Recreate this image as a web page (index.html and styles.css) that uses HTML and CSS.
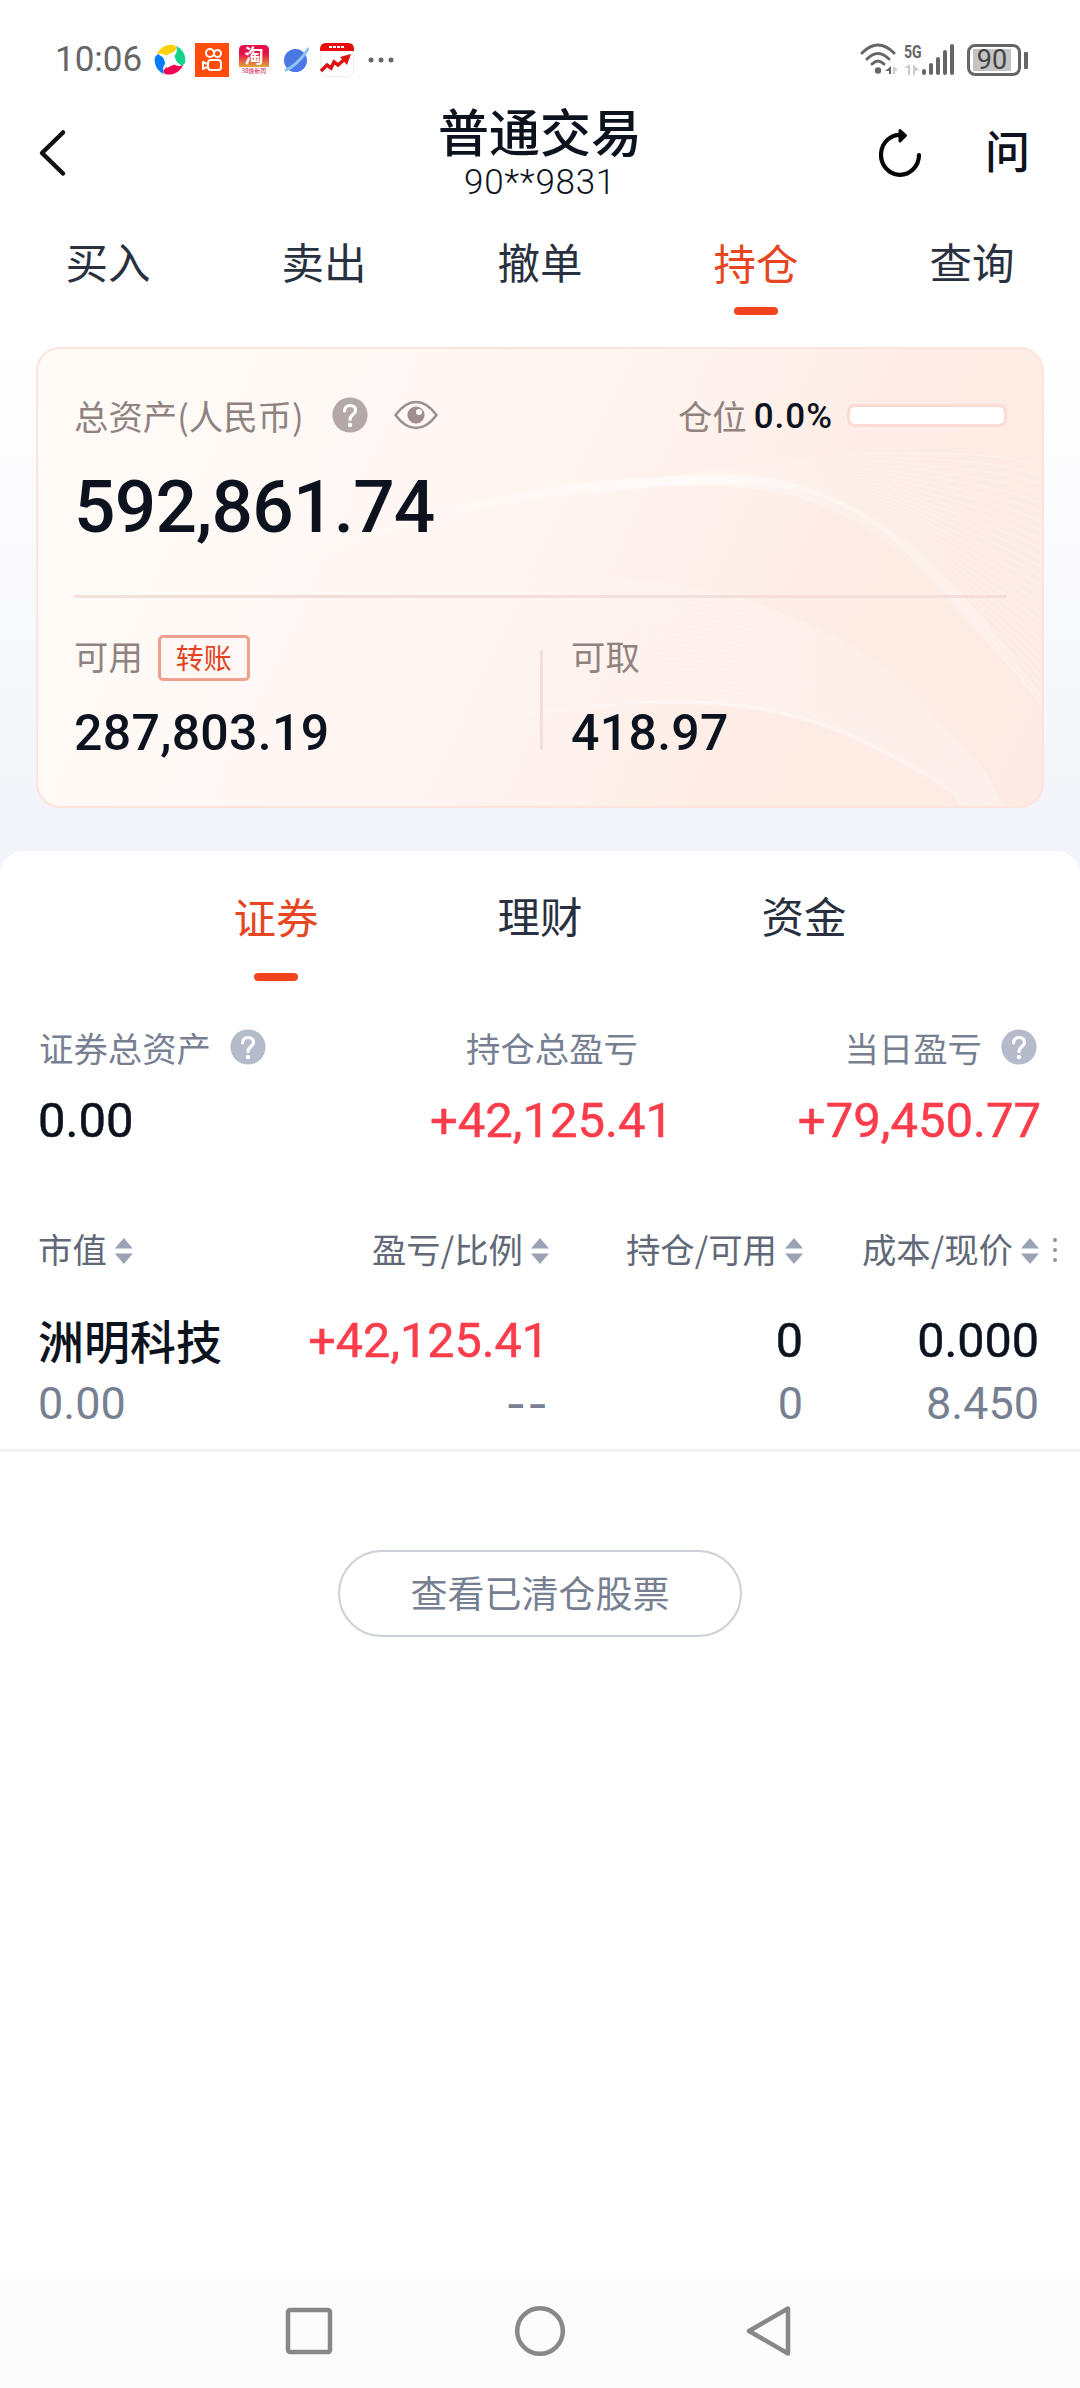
FILE: index.html
```html
<!DOCTYPE html>
<html lang="zh-CN">
<head>
  <meta charset="UTF-8">
  <meta name="viewport" content="width=device-width, initial-scale=1.0">
  <title>普通交易</title>
  <link rel="stylesheet" href="styles.css">
</head>
<body>
  <div class="status-bar">
    <span class="time">10:06</span>
    <div class="apps">
      <svg class="app-swirl" width="34" height="34" viewBox="0 0 34 34">
        <circle cx="17" cy="17" r="16" fill="#fff"/>
        <path d="M4 11A15 15 0 0 1 21 2L24 5 16 15Q10 9 4 11Z" fill="#fdd000"/>
        <path d="M23 3A15 15 0 0 1 32 20L29 23 19 15Q26 10 23 3Z" fill="#10d488"/>
        <path d="M30 22A15 15 0 0 1 12 31L10 28 18 19Q24 25 30 22Z" fill="#f90053"/>
        <path d="M11 31A15 15 0 0 1 2 14L5 11 15 18Q8 23 11 31Z" fill="#087cff"/>
        <path d="M10 14 20 9 24 20 14 25Z" fill="#fff"/>
      </svg>
      <svg class="app-video" width="34" height="34" viewBox="0 0 34 34">
        <rect width="34" height="34" fill="#ff4c0a"/>
        <g fill="none" stroke="#fff" stroke-width="2">
          <circle cx="15" cy="10" r="4"/>
          <circle cx="22.500" cy="10.500" r="3.500"/>
          <rect x="13" y="17" width="13" height="10" rx="3"/>
          <path d="M12 21 8 19V26L12 24" stroke-linejoin="round"/>
        </g>
      </svg>
      <svg class="app-shop" width="30" height="30" viewBox="0 0 30 30">
        <defs>
          <linearGradient id="shop" x2="0" y2="1">
            <stop offset=".4" stop-color="#e8104a"/>
            <stop offset="1" stop-color="#dfa63a"/>
          </linearGradient>
        </defs>
        <rect width="30" height="30" rx="5" fill="#fff"/>
        <path d="M0 22V5Q0 0 5 0H25Q30 0 30 5V22Z" fill="url(#shop)"/>
        <text x="15" y="18" font-size="19" font-weight="700" fill="#fff">淘</text>
        <text x="15" y="28" font-size="6" fill="#d0104a">38焕新周</text>
      </svg>
      <svg class="app-planet" width="26" height="26" viewBox="0 0 26 26">
        <circle cx="12.500" cy="13.500" r="11.500" fill="#4a78e6"/>
        <path d="M3 23C9 21 20 11 25 2" fill="none" stroke="#8fc4f5" stroke-width="3" stroke-linecap="round"/>
      </svg>
      <svg class="app-stock" width="34" height="34" viewBox="0 0 34 34">
        <rect x=".5" y=".5" width="33" height="33" rx="6" fill="#fff" stroke="#eee"/>
        <path d="M0 8V6Q0 0 6 0H28Q34 0 34 6V8Z" fill="#e80c0c"/>
        <path d="M9 4H25" stroke="#fff" stroke-width="2" stroke-dasharray="3 1"/>
        <path d="M1 28 7 22 11 25 14 19 18 22 26 15" fill="none" stroke="#dc1212" stroke-width="3.500"/>
        <path d="M20 14 31 11 27 22Z" fill="#dc1212"/>
      </svg>
      <svg width="26" height="6" viewBox="0 0 26 6" fill="#666">
        <circle cx="3" cy="3" r="2.500"/><circle cx="13" cy="3" r="2.500"/><circle cx="23" cy="3" r="2.500"/>
      </svg>
    </div>
    <div class="signals">
      <svg width="38" height="34" viewBox="0 0 38 34">
        <g fill="none" stroke="#666" stroke-width="3" stroke-linecap="round">
          <path d="M2 10Q18 -6 34 10"/>
          <path d="M7 16Q18 5 29 16"/>
          <path d="M12 21Q18 15 24 21"/>
        </g>
        <circle cx="18" cy="27.500" r="3.200" fill="#666"/>
        <path d="M25 28 31 23V31H29V28Z" fill="#666"/>
        <path d="M33 23 38 27 35 28V31H33Z" fill="#ccc"/>
      </svg>
      <div class="mobile">
        <span>5G</span>
        <svg width="16" height="11" viewBox="0 0 16 11" fill="#ccc"><path d="M0 4 6 0V11H4V4ZM9 0 15 6 11 7V11H9Z"/></svg>
      </div>
      <svg class="bars" width="33" height="32" viewBox="0 0 33 32" stroke="#666" stroke-width="4" stroke-linecap="round">
        <path d="M2 27V29M9 21V29M16 15V29M23 8V29M30 2V29"/>
      </svg>
      <div class="battery"><span>90</span></div>
    </div>
  </div>

  <div class="header">
    <svg class="back" width="30" height="50" viewBox="0 0 30 50">
      <path d="M25 4.500 4 25 25 45.500" fill="none" stroke="#111" stroke-width="4.500" stroke-linecap="round" stroke-linejoin="round"/>
    </svg>
    <div class="title">
      <h1>普通交易</h1>
      <p>90**9831</p>
    </div>
    <div class="actions">
      <svg width="46" height="50" viewBox="0 0 46 50">
        <path d="M42 27A19 20 0 1 1 25 7" fill="none" stroke="#050505" stroke-width="4.200" stroke-linecap="round"/>
        <path d="M23 2.500 28.500 7.500 23 13Z" fill="#050505" stroke="#050505" stroke-width="3" stroke-linejoin="round"/>
      </svg>
      <span class="ask">问</span>
    </div>
  </div>

  <div class="tabs">
    <div class="tab">买入</div>
    <div class="tab">卖出</div>
    <div class="tab">撤单</div>
    <div class="tab active">持仓</div>
    <div class="tab">查询</div>
  </div>

  <div class="asset-card">
    <svg class="waves" id="waves" viewBox="0 0 1008 461">
      <defs>
        <linearGradient id="fade">
          <stop offset="0" stop-color="#fff" stop-opacity="0"/>
          <stop offset=".5" stop-color="#fff" stop-opacity=".5"/>
          <stop offset="1" stop-color="#fff" stop-opacity=".15"/>
        </linearGradient>
        <linearGradient id="line" gradientUnits="userSpaceOnUse" x1="500" x2="1008" y1="0" y2="0">
          <stop offset="0" stop-color="#fff" stop-opacity="0"/>
          <stop offset=".4" stop-color="#fff" stop-opacity=".22"/>
          <stop offset="1" stop-color="#fff" stop-opacity=".4"/>
        </linearGradient>
      </defs>
      <path d="M200 235C430 150 570 137 697 137S870 205 911 250 985 330 1008 362L1008 352C970 300 860 128 697 128S400 150 200 235Z" fill="url(#fade)"/>
      <path d="M440 375C600 350 720 340 830 396S910 446 931 461H970C900 320 740 215 470 230Z" fill="url(#fade)" opacity=".35"/>
      <path d="M440 375C600 350 720 340 830 396S910 446 931 461" fill="none" stroke="url(#fade)" stroke-width="4"/>
    </svg>
    <div class="total-row">
      <span class="label">总资产(人民币)</span>
      <svg class="help" width="36" height="36" viewBox="0 0 36 36">
        <circle cx="18" cy="18" r="17.600" fill="#b5a9a7"/>
        <path d="M12.500 14Q13 8.500 18 8.500 23.500 8.500 23.500 13.500C23.500 17.500 18 17.500 18 22.500" fill="none" stroke="#fff" stroke-width="3.200" stroke-linecap="round"/>
        <circle cx="18" cy="28" r="2.200" fill="#fff"/>
      </svg>
      <svg class="eye" width="44" height="30" viewBox="0 0 44 30">
        <path d="M1.500 15Q11 2 22 2T42.500 15Q33 28 22 28T1.500 15Z" fill="none" stroke="#9d908e" stroke-width="2.600" stroke-linejoin="round"/>
        <circle cx="22" cy="15" r="8.600" fill="#9d908e"/>
        <circle cx="25" cy="12" r="3" fill="#fff8f5"/>
      </svg>
      <div class="position">
        <span class="label">仓位</span>
        <span class="percent">0.0%</span>
        <div class="progress"></div>
      </div>
    </div>
    <div class="total">592,861.74</div>
    <div class="split">
      <div class="cell">
        <div class="cell-head"><span class="label">可用</span><span class="transfer">转账</span></div>
        <div class="amount">287,803.19</div>
      </div>
      <div class="cell">
        <div class="cell-head"><span class="label">可取</span></div>
        <div class="amount">418.97</div>
      </div>
    </div>
  </div>

  <div class="sheet">
    <div class="sub-tabs">
      <div class="tab active">证券</div>
      <div class="tab">理财</div>
      <div class="tab">资金</div>
    </div>

    <div class="summary">
      <div>
        <p>证券总资产
          <svg class="help" width="36" height="36" viewBox="0 0 36 36">
            <circle cx="18" cy="18" r="17.600" fill="#b6bbcc"/>
            <path d="M12.500 14Q13 8.500 18 8.500 23.500 8.500 23.500 13.500C23.500 17.500 18 17.500 18 22.500" fill="none" stroke="#fff" stroke-width="3.200" stroke-linecap="round"/>
            <circle cx="18" cy="28" r="2.200" fill="#fff"/>
          </svg>
        </p>
        <div class="value">0.00</div>
      </div>
      <div>
        <p>持仓总盈亏</p>
        <div class="value up">+42,125.41</div>
      </div>
      <div>
        <p>当日盈亏
          <svg class="help" width="36" height="36" viewBox="0 0 36 36">
            <circle cx="18" cy="18" r="17.600" fill="#b6bbcc"/>
            <path d="M12.500 14Q13 8.500 18 8.500 23.500 8.500 23.500 13.500C23.500 17.500 18 17.500 18 22.500" fill="none" stroke="#fff" stroke-width="3.200" stroke-linecap="round"/>
            <circle cx="18" cy="28" r="2.200" fill="#fff"/>
          </svg>
        </p>
        <div class="value up">+79,450.77</div>
      </div>
    </div>

    <div class="grid-row list-head">
      <div>市值<i class="sort"></i></div>
      <div>盈亏/比例<i class="sort"></i></div>
      <div>持仓/可用<i class="sort"></i></div>
      <div>成本/现价<i class="sort"></i></div>
      <svg class="more" width="4" height="28" viewBox="0 0 4 28" fill="#8e94a6">
        <circle cx="2" cy="4" r="2"/><circle cx="2" cy="14" r="2"/><circle cx="2" cy="24" r="2"/>
      </svg>
    </div>

    <div class="stock">
      <div class="grid-row main-line">
        <div class="name">洲明科技</div>
        <div class="up">+42,125.41</div>
        <div>0</div>
        <div>0.000</div>
      </div>
      <div class="grid-row sub-line">
        <div>0.00</div>
        <div class="dash">--</div>
        <div>0</div>
        <div>8.450</div>
      </div>
    </div>

    <button class="cleared">查看已清仓股票</button>
  </div>

  <div class="nav-bar">
    <svg width="50" height="52" viewBox="0 0 50 52"><rect x="4" y="5" width="42" height="42" rx="2"/></svg>
    <svg width="50" height="52" viewBox="0 0 50 52"><circle cx="25" cy="26" r="22.800"/></svg>
    <svg width="50" height="52" viewBox="0 0 50 52"><path d="M42 3.500V48.500L3 26Z"/></svg>
  </div>

  <script>
    // thin lines between two curves, [start, c1, c2, mid, c3, end]
    function drawWave(from, to, count) {
      const svg = document.getElementById('waves');
      for (let i = 0; i <= count; i++) {
        const p = from.map((v, k) => (v + (to[k] - v) * i / count).toFixed(1));
        const path = document.createElementNS('http://www.w3.org/2000/svg', 'path');
        path.setAttribute('d', `M${p[0]} ${p[1]}C${p.slice(2, 8).join(' ')}S${p.slice(8).join(' ')}`);
        path.setAttribute('class', 'wave-line');
        svg.appendChild(path);
      }
    }

    drawWave([500, 158, 720, 110, 820, 150, 911, 250, 985, 330, 1008, 362],
             [500, 158, 640, 125, 780, 104, 880, 106, 970, 112, 1008, 119], 26);
    drawWave([440, 375, 600, 350, 720, 340, 830, 396, 910, 446, 931, 461],
             [440, 225, 620, 225, 750, 240, 860, 340, 940, 410, 966, 461], 24);
  </script>
</body>
</html>
```
FILE: styles.css
```css
* {
  box-sizing: border-box;
}
body {
  margin: 0;
  min-height: 2388px;
  display: flex;
  flex-direction: column;
  font-family: "Noto Sans CJK SC", sans-serif;
  color: #0d131e;
  background: linear-gradient(#fff 340px, #f4f5fa 800px);
}
h1, p {
  margin: 0;
  font-weight: 400;
}
svg {
  display: block;
  flex: none;
}
.up {
  color: #fb3c4b;
}

/* status bar */
.status-bar {
  height: 88px;
  padding: 31px 52px 0 55px;
  display: flex;
  align-items: center;
  font-family: Roboto, sans-serif;
  color: #666;
}
.time {
  width: 98px;
  font-size: 35px;
}
.apps {
  display: flex;
  align-items: center;
}
.app-video {
  margin-left: 8px;
}
.app-shop {
  margin: 0 14px 0 10px;
  font-family: "Noto Sans CJK SC", sans-serif;
  text-anchor: middle;
}
.app-stock {
  margin: 0 14px 0 11px;
}
.signals {
  margin-left: auto;
  display: flex;
  align-items: center;
}
.mobile {
  width: 18px;
  height: 32px;
  margin: 0 0 0 6px;
  font-size: 18px;
  line-height: 16px;
  font-weight: 700;
}
.mobile span {
  display: block;
  width: 18px;
  transform: scaleX(.78);
  transform-origin: left;
}
.mobile svg {
  margin-top: 4px;
}
.battery {
  position: relative;
  width: 54px;
  height: 32px;
  margin: 0 7px 0 12px;
  border: 3px solid #666;
  border-radius: 8px;
  padding: 2px 3px;
  font-size: 27px;
  line-height: 22px;
  text-align: center;
  color: #444;
}
.battery span {
  display: block;
  width: 38px;
  height: 22px;
  background: #c4c4c4;
}
.battery::after {
  content: "";
  position: absolute;
  right: -10px;
  top: 5px;
  width: 4px;
  height: 17px;
  border-radius: 1px;
  background: #666;
}

/* title */
.header {
  height: 130px;
  padding: 0 50px 0 38px;
  display: grid;
  grid-template-columns: 380px 1fr 380px;
  align-items: center;
}
.title {
  margin: 0 -14px 0 -2px;
  text-align: center;
}
h1 {
  font-size: 51px;
  line-height: 54px;
  font-weight: 500;
}
.title p {
  margin-top: 5px;
  font: 300 35px/42px Roboto, sans-serif;
  letter-spacing: .7px;
}
.actions {
  display: flex;
  justify-content: flex-end;
  align-items: center;
  gap: 62px;
}
.ask {
  font-size: 45px;
  line-height: 50px;
  font-weight: 500;
  margin-top: -6px;
}

.tabs {
  display: flex;
  height: 129px;
}
.tab {
  flex: 1;
  padding-top: 21px;
  font-size: 42.5px;
  line-height: 44px;
  text-align: center;
  color: #29303f;
}
.tab.active {
  color: #e64621;
  padding-top: 22px;
}
.tab.active::after {
  content: "";
  display: block;
  width: 44px;
  height: 8px;
  margin: 23px auto 0;
  border-radius: 4px;
  background: #f0421c;
}

/* asset card */
.asset-card {
  position: relative;
  height: 461px;
  margin: 0 36px;
  padding: 48px 35px 0 36px;
  border: 2px solid #fde3de;
  border-radius: 24px;
  background: linear-gradient(115deg, #fffaf6 15%, #fff5f1 48%, #feede6 72%, #fdeae4);
  overflow: hidden;
}
.asset-card > div {
  position: relative;
}
.waves {
  position: absolute;
  left: -2px;
  top: -2px;
  width: 1008px;
  height: 461px;
}
.wave-line {
  fill: none;
  stroke: url(#line);
}
.label {
  font-size: 34.4px;
  line-height: 36px;
  color: #8f8281;
}
.total-row {
  display: flex;
  align-items: center;
  height: 36px;
}
.total-row .label {
  margin-top: -1px;
}
.total-row .help {
  margin-left: 28px;
}
.eye {
  margin-left: 26px;
}
.position {
  margin-left: auto;
  display: flex;
  align-items: center;
}
.percent {
  margin: 3px 14px 0 7px;
  font: 500 35px/36px Roboto, sans-serif;
  letter-spacing: 1px;
}
.progress {
  width: 160px;
  height: 23px;
  border: 3px solid #fddad3;
  border-radius: 8px;
  background: #fff;
}
.total {
  height: 165px;
  padding-top: 35px;
  border-bottom: 3px solid #f4dedc;
  font: 500 73px/78px Roboto, sans-serif;
  letter-spacing: -.8px;
}
.split {
  display: flex;
  margin-top: 37px;
}
.cell {
  width: 466px;
}
.cell + .cell {
  margin-top: 15px;
  height: 100px;
  border-left: 3px solid #f4dedc;
  padding-left: 28px;
}
.cell + .cell .cell-head {
  margin-top: -15px;
}
.cell-head {
  display: flex;
  align-items: center;
  height: 46px;
}
.cell-head .label {
  margin-top: -6px;
}
.transfer {
  width: 92px;
  height: 46px;
  margin-left: 15px;
  border: 3px solid #ee9f8e;
  border-radius: 5px;
  font-size: 28px;
  line-height: 38px;
  text-align: center;
  color: #e0431e;
}
.amount {
  margin-top: 26px;
  font: 500 50px/52px Roboto, sans-serif;
  letter-spacing: .3px;
}

/* holdings */
.sheet {
  flex: 1;
  margin-top: 43px;
  border-radius: 24px 24px 0 0;
  background: #fff;
}
.sub-tabs {
  display: flex;
  height: 178px;
  padding: 21px 144px 0;
}
.sub-tabs .tab.active::after {
  margin-top: 35px;
}
.summary {
  display: grid;
  grid-template-columns: 284px 1fr 260px;
  padding: 0 39px 0 38px;
}
.summary > div {
  display: flex;
  flex-direction: column;
  align-items: center;
}
.summary > div:first-child {
  align-items: flex-start;
}
.summary > div:last-child {
  align-items: flex-end;
}
.summary p {
  display: flex;
  align-items: center;
  gap: 19px;
  height: 36px;
  padding-left: 1px;
  font-size: 34.4px;
  line-height: 36px;
  color: #777f92;
}
.summary > div:last-child p {
  padding-right: 4px;
}
.value {
  margin-top: 27px;
  font: 400 49px/58px Roboto, sans-serif;
  -webkit-text-stroke: .5px currentColor;
}
.grid-row {
  display: grid;
  grid-template-columns: 220px 291px 254px 236px;
  padding-left: 38px;
}
.grid-row > div {
  text-align: right;
}
.grid-row > div:first-child {
  text-align: left;
}
.list-head {
  position: relative;
  margin-top: 78px;
  font-size: 34.4px;
  line-height: 40px;
  color: #616978;
}
.more {
  position: absolute;
  left: 1053px;
  top: 8px;
}
.sort {
  display: inline-block;
  width: 18px;
  height: 26px;
  margin-left: 8px;
  vertical-align: -1px;
  background: #9ba2b4;
  clip-path: polygon(50% 0, 100% 40%, 0 40%, 0 60%, 100% 60%, 50% 100%, 0 60%, 0 40%);
}
.stock {
  padding-top: 42px;
  height: 184px;
  border-bottom: 3px solid #f2f2f2;
}
.main-line {
  height: 62px;
  font: 400 48.5px/62px Roboto, sans-serif;
}
.main-line > div {
  -webkit-text-stroke: .5px currentColor;
}
.main-line .name {
  font: 500 46px/58px "Noto Sans CJK SC", sans-serif;
  -webkit-text-stroke: 0;
}
.sub-line {
  height: 64px;
  font: 400 45px/64px Roboto, sans-serif;
  color: #777f92;
}
.dash {
  font-family: Inter, sans-serif;
  letter-spacing: 1px;
}
.cleared {
  display: block;
  width: 404px;
  height: 87px;
  margin: 98px auto 0;
  padding: 0 0 3px;
  border: 2px solid #ccd0d8;
  border-radius: 44px;
  background: #fff;
  font: 400 37px/40px "Noto Sans CJK SC", sans-serif;
  color: #777f92;
}

.nav-bar {
  display: flex;
  justify-content: center;
  gap: 181px;
  height: 114px;
  padding-top: 31px;
  background: #fcfcfc;
}
.nav-bar svg {
  fill: none;
  stroke: #888;
  stroke-width: 4.500;
  stroke-linejoin: round;
}
```
